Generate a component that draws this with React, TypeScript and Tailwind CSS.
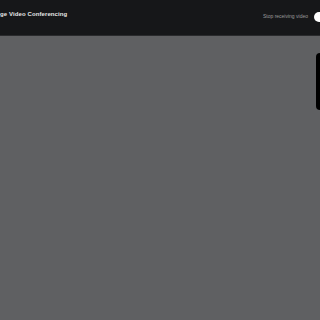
export default function App() {
  return (
    <div className="w-[320px] h-[320px] overflow-hidden flex flex-col bg-[#5f6062] font-['Liberation_Sans',Arial,sans-serif]">
      {/* Header */}
      <header className="h-[36px] shrink-0 flex items-center justify-between bg-[#161719] border-b border-[#2a2b2d]">
        <h1 className="text-[6px] leading-none font-bold text-[#e6e6e6] tracking-[0.1px] -mt-[7px] whitespace-nowrap">
          ge Video Conferencing
        </h1>
        <div className="flex items-center gap-[6px] -mr-[5px] -mt-[2px]">
          <span className="text-[5px] leading-none text-[#9a9a9a] whitespace-nowrap">Stop receiving video</span>
          <div className="w-[11px] h-[10px] rounded-full bg-white" />
        </div>
      </header>

      {/* Stage */}
      <main className="flex-1 relative">
        <div className="absolute right-0 top-[17px] w-[4px] h-[57px] bg-black rounded-l-[4px]" />
      </main>
    </div>
  )
}
